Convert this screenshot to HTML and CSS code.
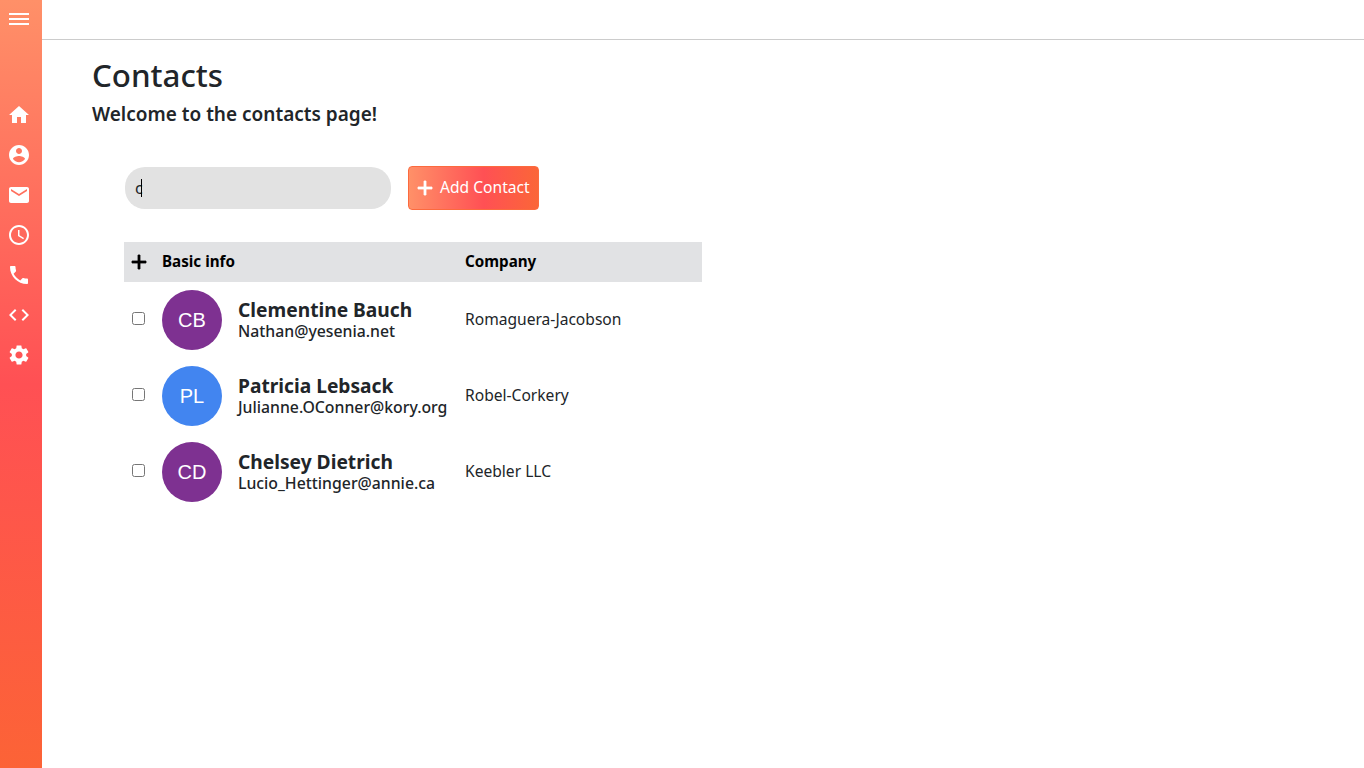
FILE: index.html
```html
<!DOCTYPE html>
<html lang="en">

<head>
    <meta charset="UTF-8">
    <meta name="viewport" content="width=device-width, initial-scale=1.0">
    <title>Contacts</title>
    <link rel="stylesheet" href="styles.css">
</head>

<body>
    <nav class="sidebar">
        <div class="menu-btn">
            <span></span>
            <span></span>
            <span></span>
        </div>
        <ul class="nav-list">
            <li><svg viewBox="0 0 24 24"><path d="M10 20v-6h4v6h5v-8h3L12 3 2 12h3v8z"/></svg></li>
            <li><svg viewBox="0 0 24 24"><path d="M12 2C6.48 2 2 6.48 2 12s4.48 10 10 10 10-4.48 10-10S17.52 2 12 2zm0 3c1.66 0 3 1.34 3 3s-1.34 3-3 3-3-1.34-3-3 1.34-3 3-3zm0 14.2c-2.5 0-4.71-1.28-6-3.22.03-1.99 4-3.08 6-3.08 1.99 0 5.97 1.09 6 3.08-1.29 1.94-3.5 3.22-6 3.22z"/></svg></li>
            <li><svg viewBox="0 0 24 24"><path d="M20 4H4c-1.1 0-1.99.9-1.99 2L2 18c0 1.1.9 2 2 2h16c1.1 0 2-.9 2-2V6c0-1.1-.9-2-2-2zm0 4l-8 5-8-5V6l8 5 8-5v2z"/></svg></li>
            <li><svg viewBox="0 0 24 24"><path d="M11.99 2C6.47 2 2 6.48 2 12s4.47 10 9.99 10C17.52 22 22 17.52 22 12S17.52 2 11.99 2zM12 20c-4.42 0-8-3.58-8-8s3.58-8 8-8 8 3.58 8 8-3.58 8-8 8zm.5-13H11v6l5.25 3.15.75-1.23-4.5-2.67z"/></svg></li>
            <li><svg viewBox="0 0 24 24"><path d="M6.62 10.79c1.44 2.83 3.76 5.14 6.59 6.59l2.2-2.2c.27-.27.67-.36 1.02-.24 1.12.37 2.33.57 3.57.57.55 0 1 .45 1 1V20c0 .55-.45 1-1 1-9.39 0-17-7.61-17-17 0-.55.45-1 1-1h3.5c.55 0 1 .45 1 1 0 1.25.2 2.45.57 3.57.11.35.03.74-.25 1.02l-2.2 2.2z"/></svg></li>
            <li><svg viewBox="0 0 24 24"><path d="M9.4 16.6L4.8 12l4.6-4.6L8 6l-6 6 6 6 1.4-1.4zm5.2 0l4.6-4.6-4.6-4.6L16 6l6 6-6 6-1.4-1.4z"/></svg></li>
            <li><svg viewBox="0 0 24 24"><path d="M19.14 12.94c.04-.3.06-.61.06-.94 0-.32-.02-.64-.07-.94l2.03-1.58c.18-.14.23-.41.12-.61l-1.92-3.32c-.12-.22-.37-.29-.59-.22l-2.39.96c-.5-.38-1.03-.7-1.62-.94l-.36-2.54c-.04-.24-.24-.41-.48-.41h-3.84c-.24 0-.43.17-.47.41l-.36 2.54c-.59.24-1.13.57-1.62.94l-2.39-.96c-.22-.08-.47 0-.59.22L2.74 8.87c-.12.21-.08.47.12.61l2.03 1.58c-.05.3-.09.63-.09.94s.02.64.07.94l-2.03 1.58c-.18.14-.23.41-.12.61l1.92 3.32c.12.22.37.29.59.22l2.39-.96c.5.38 1.03.7 1.62.94l.36 2.54c.05.24.24.41.48.41h3.84c.24 0 .44-.17.47-.41l.36-2.54c.59-.24 1.13-.56 1.62-.94l2.39.96c.22.08.47 0 .59-.22l1.92-3.32c.12-.22.07-.47-.12-.61l-2.01-1.58zM12 15.6c-1.98 0-3.6-1.62-3.6-3.6s1.62-3.6 3.6-3.6 3.6 1.62 3.6 3.6-1.62 3.6-3.6 3.6z"/></svg></li>
        </ul>
    </nav>

    <div class="content">
        <header class="topbar"></header>
        <main class="page">
            <h1>Contacts</h1>
            <h2>Welcome to the contacts page!</h2>

            <div class="contacts">
                <div class="controls">
                    <div class="search-box">
                        <input class="search" type="text" value="c">
                        <span class="caret"></span>
                    </div>
                    <button class="add-btn">
                        <svg viewBox="0 0 24 24"><path d="M19 13h-6v6h-2v-6H5v-2h6V5h2v6h6v2z"/></svg>
                        <span class="add-label">Add Contact</span>
                    </button>
                </div>

                <table class="contact-table">
                    <thead>
                        <tr>
                            <th class="col-check"><svg viewBox="0 0 24 24"><path d="M19 13h-6v6h-2v-6H5v-2h6V5h2v6h6v2z"/></svg></th>
                            <th class="col-info">Basic info</th>
                            <th>Company</th>
                        </tr>
                    </thead>
                    <tbody>
                        <tr>
                            <td class="col-check"><input type="checkbox"></td>
                            <td class="col-info">
                                <div class="person">
                                    <div class="avatar purple">CB</div>
                                    <div>
                                        <div class="name">Clementine Bauch</div>
                                        <div class="email">Nathan@yesenia.net</div>
                                    </div>
                                </div>
                            </td>
                            <td>Romaguera-Jacobson</td>
                        </tr>
                        <tr>
                            <td class="col-check"><input type="checkbox"></td>
                            <td class="col-info">
                                <div class="person">
                                    <div class="avatar blue">PL</div>
                                    <div>
                                        <div class="name">Patricia Lebsack</div>
                                        <div class="email">Julianne.OConner@kory.org</div>
                                    </div>
                                </div>
                            </td>
                            <td>Robel-Corkery</td>
                        </tr>
                        <tr>
                            <td class="col-check"><input type="checkbox"></td>
                            <td class="col-info">
                                <div class="person">
                                    <div class="avatar purple">CD</div>
                                    <div>
                                        <div class="name">Chelsey Dietrich</div>
                                        <div class="email">Lucio_Hettinger@annie.ca</div>
                                    </div>
                                </div>
                            </td>
                            <td>Keebler LLC</td>
                        </tr>
                    </tbody>
                </table>
            </div>
        </main>
    </div>
</body>

</html>
```

FILE: styles.css
```css
* {
    box-sizing: border-box;
}

body {
    font-family: "Noto Sans", Arial, sans-serif;
    font-size: 15.6px;
    margin: 0;
    color: #212529;
    background: #fff;
    display: flex;
    min-height: 768px;
}

.sidebar {
    width: 42px;
    flex-shrink: 0;
    padding-left: 7px;
    background: linear-gradient(180deg, #ff9068 0%, #ff5054 50%, #fc6336 100%);
}

.menu-btn {
    width: 24px;
    height: 95px;
    padding: 12.5px 2px 0;
}

.menu-btn span {
    display: block;
    height: 2px;
    margin-bottom: 3px;
    background: #fff;
}

.nav-list {
    list-style: none;
    margin: 0;
    padding: 0;
}

.nav-list li {
    height: 40px;
    display: flex;
    align-items: center;
}

.nav-list svg {
    width: 24px;
    height: 24px;
    fill: #fff;
}

.content {
    flex: 1;
}

.topbar {
    height: 40px;
    border-bottom: 1px solid #ccc;
}

.page {
    padding: 15px 50px;
}

h1 {
    font-size: 31.3px;
    font-weight: 500;
    line-height: 40px;
    margin: 0;
}

h2 {
    font-size: 19px;
    font-weight: 600;
    line-height: 24px;
    margin: 7px 0 0;
}

.contacts {
    padding-left: 32px;
}

.controls {
    display: flex;
    align-items: center;
    margin-top: 40px;
}

.search-box {
    position: relative;
    margin-left: 1px;
}

.search {
    display: block;
    width: 266px;
    height: 42px;
    padding: 0 10px;
    font-family: inherit;
    font-size: 16px;
    color: #212529;
    border: none;
    border-radius: 20px;
    outline: none;
    background: #e2e2e2;
}

.caret {
    position: absolute;
    left: 16px;
    top: 12px;
    width: 1px;
    height: 18px;
    background: #000;
}

.add-btn {
    display: flex;
    align-items: center;
    gap: 3px;
    width: 131px;
    height: 44px;
    margin-left: 17px;
    padding: 0 4px;
    font-family: inherit;
    font-size: 15.6px;
    white-space: nowrap;
    color: #fff;
    border: 1px solid #fc6a3e;
    border-radius: 4px;
    background: linear-gradient(90deg, #ff9068 0%, #ff5054 58%, #fb6638 100%);
}

.add-label {
    padding-bottom: 2px;
}

.add-btn svg {
    width: 24px;
    height: 24px;
    flex-shrink: 0;
    fill: #fff;
    stroke: #fff;
    stroke-width: 0.8;
}

.contact-table {
    width: 578px;
    margin-top: 32px;
    border-collapse: collapse;
    table-layout: fixed;
}

.contact-table th,
.contact-table td {
    padding: 7px 8px 9px;
    text-align: left;
}

.contact-table th {
    height: 40px;
    font-size: 15.2px;
    font-weight: 700;
    color: #000;
    background: #e1e2e4;
}

.contact-table .col-check {
    width: 30px;
    padding: 8px;
}

.contact-table .col-info {
    width: 303px;
    padding: 8px;
}

.contact-table th.col-info {
    padding: 7px 8px 9px;
}

.col-check input {
    display: block;
    margin: 0 0 3px;
}

.col-check svg {
    display: block;
    width: 24px;
    height: 24px;
    margin: 0 -5px;
    fill: #000;
    stroke: #000;
    stroke-width: 0.8;
}

.person {
    display: flex;
    align-items: center;
    gap: 16px;
}

.avatar {
    width: 60px;
    height: 60px;
    display: flex;
    align-items: center;
    justify-content: center;
    flex-shrink: 0;
    border-radius: 50%;
    font-family: "Liberation Sans", Arial, sans-serif;
    font-size: 20px;
    color: #fff;
}

.purple {
    background: #7e3191;
}

.blue {
    background: #4285f0;
}

.name {
    font-size: 19.2px;
    font-weight: 700;
    line-height: 22px;
}

.email {
    font-size: 15.8px;
    font-weight: 500;
    line-height: 20px;
}
```
